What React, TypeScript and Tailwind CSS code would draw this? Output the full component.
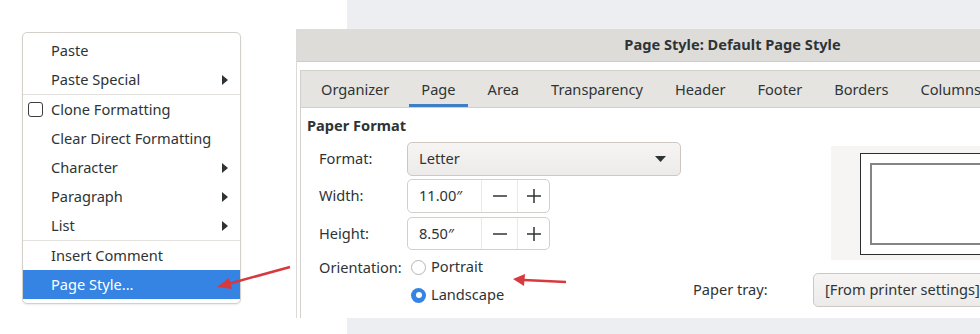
import React from "react";

const font = { fontFamily: '"Noto Sans", "DejaVu Sans", sans-serif' };

function Arrow() {
  return (
    <svg width="6" height="10" viewBox="0 0 6 10" className="block">
      <path d="M0 0 L6 5 L0 10 Z" fill="#2e3436" />
    </svg>
  );
}

function MenuItem({ label, sub, check, active }: { label: string; sub?: boolean; check?: boolean; active?: boolean }) {
  return (
    <div className={`h-[29px] flex items-center pl-[5px] pr-[12px] ${active ? "bg-[#3584e4] text-white" : "text-[#2e3436]"}`}>
      <div className="w-[23px] flex items-center">
        {check && <div className="w-[15px] h-[15px] rounded-[3px] border border-[#3d3d3d] bg-white" />}
      </div>
      <span className="flex-1 text-[14.6px] leading-none">{label}</span>
      {sub && <Arrow />}
    </div>
  );
}

function Sep() {
  return <div className="h-px bg-[#e3e1de]" />;
}

function Menu() {
  return (
    <div className="w-[219px] rounded-[5px] border border-[#d4d1cd] bg-white pt-[3px] pb-[4px] overflow-hidden shadow-[0_1px_2px_rgba(0,0,0,0.08)]">
      <MenuItem label="Paste" />
      <MenuItem label="Paste Special" sub />
      <Sep />
      <MenuItem label="Clone Formatting" check />
      <MenuItem label="Clear Direct Formatting" />
      <MenuItem label="Character" sub />
      <MenuItem label="Paragraph" sub />
      <MenuItem label="List" sub />
      <Sep />
      <MenuItem label="Insert Comment" />
      <MenuItem label="Page Style..." active />
    </div>
  );
}

function Spin({ value }: { value: string }) {
  return (
    <div className="w-[143px] rounded-[5px] border border-[#d3cfcb] bg-white flex">
      <div className="w-[73px] flex items-center pl-[11px] text-[#2e3436]">{value}</div>
      <div className="w-[36px] border-l border-[#ebe9e7] flex items-center justify-center">
        <svg width="14" height="14" viewBox="0 0 14 14"><path d="M0 7 H14" stroke="#2e3436" strokeWidth="1.5" /></svg>
      </div>
      <div className="flex-1 border-l border-[#ebe9e7] flex items-center justify-center">
        <svg width="14" height="14" viewBox="0 0 14 14"><path d="M0 7 H14 M7 0 V14" stroke="#2e3436" strokeWidth="1.5" /></svg>
      </div>
    </div>
  );
}

function Tab({ label, active }: { label: string; active?: boolean }) {
  return (
    <div className="relative px-3 h-full flex items-center pt-px text-[#2e3436] whitespace-nowrap">
      {label}
      {active && <div className="absolute left-0 right-0 bottom-0 h-[3px] bg-[#3f7ec6]" />}
    </div>
  );
}

function Dialog() {
  return (
    <div className="w-[872px] h-[289px] bg-white flex flex-col shrink-0 border-l border-[#dcd9d6] text-[14.6px]">
      <div className="h-[33px] bg-[#dedcd9] border-b border-[#cfccc8] flex items-center justify-center font-bold text-[#2e3436]">
        Page Style: Default Page Style
      </div>
      <div className="h-[8px]" />
      <div className="flex-1 ml-[3px] border-l border-t border-[#d3cfcb] flex flex-col">
        <div className="h-[37px] bg-[#e6e4e1] border-b border-[#d3cfcb] flex items-stretch pl-[8px] gap-2">
          <Tab label="Organizer" />
          <Tab label="Page" active />
          <Tab label="Area" />
          <Tab label="Transparency" />
          <Tab label="Header" />
          <Tab label="Footer" />
          <Tab label="Borders" />
          <Tab label="Columns" />
        </div>
        <div className="flex-1 pl-[6px] pt-[8px] text-[#2e3436]">
          <div className="font-bold h-[19px] leading-[19px]">Paper Format</div>
          <div className="flex mt-[7px]">
            <div className="flex flex-col pl-[12px]">
              <div className="flex items-center h-[34px]">
                <div className="w-[88px]">Format:</div>
                <div className="w-[274px] h-[34px] rounded-[5px] border border-[#cdc8c3] bg-gradient-to-b from-[#f6f5f4] to-[#edebe9] flex items-center pl-[11px] pr-[14px]">
                  <span className="flex-1">Letter</span>
                  <svg width="11" height="6" viewBox="0 0 11 6"><path d="M0 0 H11 L5.5 6 Z" fill="#2e3436" /></svg>
                </div>
              </div>
              <div className="flex items-center h-[34px] mt-[3px]">
                <div className="w-[88px]">Width:</div>
                <div className="h-[34px] flex"><Spin value="11.00″" /></div>
              </div>
              <div className="flex items-center h-[33px] mt-[4px]">
                <div className="w-[88px]">Height:</div>
                <div className="h-[33px] flex"><Spin value="8.50″" /></div>
              </div>
              <div className="flex mt-[6px]">
                <div className="w-[88px] h-[22px] leading-[22px]">Orientation:</div>
                <div className="flex flex-col">
                  <div className="flex items-center h-[22px] pl-[4px]">
                    <div className="w-[15px] h-[15px] rounded-full border border-[#bab4ae] bg-white" />
                    <span className="ml-[5px]">Portrait</span>
                  </div>
                  <div className="flex items-center h-[22px] mt-[6px] pl-[4px]">
                    <div className="w-[15px] h-[15px] rounded-full bg-[#3584e4] flex items-center justify-center">
                      <div className="w-[6px] h-[6px] rounded-full bg-white" />
                    </div>
                    <span className="ml-[5px]">Landscape</span>
                  </div>
                </div>
              </div>
            </div>
            <div className="flex flex-col ml-[12px]">
              <div className="ml-[138px] mt-[4px] w-[160px] h-[114px] bg-[#f6f5f4] pl-[29px] pt-[7px]">
                <div className="w-[140px] h-[102px] border border-[#2e2e2e] bg-white p-[9px]">
                  <div className="w-full h-full border-2 border-[#858585]" />
                </div>
              </div>
              <div className="flex items-center mt-[13px]">
                <div className="w-[120px]">Paper tray:</div>
                <div className="w-[200px] h-[34px] rounded-[5px] border border-[#cdc8c3] bg-gradient-to-b from-[#f6f5f4] to-[#edebe9] flex items-center pl-[11px] whitespace-nowrap">
                  [From printer settings]
                </div>
              </div>
            </div>
          </div>
        </div>
      </div>
    </div>
  );
}

export default function App() {
  return (
    <div className="w-[980px] h-[334px] bg-white relative overflow-hidden flex" style={font}>
      <div className="w-[296px] shrink-0 pl-[22px] pt-[32px]">
        <Menu />
      </div>
      <div className="flex flex-col">
        <div className="h-[29px] flex">
          <div className="w-[51px] bg-white" />
          <div className="w-[700px] bg-[#eceef1]" />
        </div>
        <Dialog />
        <div className="h-[16px] flex">
          <div className="w-[51px] bg-white" />
          <div className="w-[700px] bg-[#eceef1]" />
        </div>
      </div>
      <svg className="absolute left-0 top-0 pointer-events-none" width="980" height="334">
        <g stroke="#d63a3f" strokeWidth="2.5" fill="#d63a3f">
          <line x1="290" y1="267" x2="228" y2="284" />
          <polygon points="217,287 229,278 232,289" stroke="none" />
          <line x1="566" y1="282" x2="524" y2="280" />
          <polygon points="513,279 525,274 524,286" stroke="none" />
        </g>
      </svg>
    </div>
  );
}
